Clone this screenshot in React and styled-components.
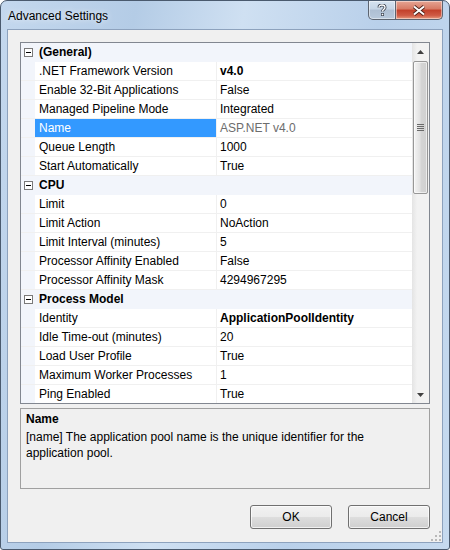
import React from "react";
import styled, { createGlobalStyle } from "styled-components";

const GlobalStyle = createGlobalStyle`
  body {
    margin: 0;
    font-family: "Liberation Sans", Arial, sans-serif;
    font-size: 12px;
    color: #000;
  }
`;

const Window = styled.div`
  width: 450px;
  height: 550px;
  box-sizing: border-box;
  border: 1px solid #4a5a6e;
  border-radius: 7px 7px 3px 3px;
  background: linear-gradient(
    100deg,
    #c4d8ee 0%,
    #b4cce6 25%,
    #cfe0f2 45%,
    #b9d0ea 70%,
    #c6daef 100%
  );
  display: flex;
  flex-direction: column;
  overflow: hidden;
`;

const TitleBar = styled.div`
  height: 28px;
  display: flex;
  align-items: flex-start;
  flex-shrink: 0;
`;

const Title = styled.div`
  padding: 8px 0 0 7px;
  font-size: 12px;
  color: #000;
  text-shadow: 0 0 6px rgba(255, 255, 255, 0.9);
`;

const Caption = styled.div`
  margin-left: auto;
  margin-right: 6px;
  display: flex;
`;

const CaptionButton = styled.div`
  height: 19px;
  width: ${(p) => (p.close ? "47px" : "28px")};
  box-sizing: border-box;
  border: 1px solid #5c6470;
  border-top: none;
  border-left-width: ${(p) => (p.close ? "0" : "1px")};
  border-radius: ${(p) => (p.close ? "0 0 5px 0" : "0 0 0 5px")};
  background: ${(p) =>
    p.close
      ? "linear-gradient(#e6a594 0%, #d77a64 45%, #c2402a 50%, #cf5b45 80%, #e79a7e 100%)"
      : "linear-gradient(#d6e3f0 0%, #c5d5e6 45%, #aebfd3 50%, #b8c9dc 100%)"};
  box-shadow: inset 0 0 0 1px rgba(255, 255, 255, 0.45);
  display: flex;
  align-items: center;
  justify-content: center;
`;

const Client = styled.div`
  flex: 1;
  margin: 0 6px 6px;
  background: #f0f0f0;
  border: 1px solid #8da2bd;
  padding: 12px 12px 13px;
  display: flex;
  flex-direction: column;
  position: relative;
`;

const Grid = styled.div`
  height: 362px;
  border: 1px solid #828790;
  background: #fff;
  display: flex;
  overflow: hidden;
  box-sizing: border-box;
`;

const Rows = styled.div`
  flex: 1;
  overflow: hidden;
`;

const Row = styled.div`
  display: flex;
  height: 18px;
  border-bottom: 1px solid #f0f0f0;
  background: ${(p) => (p.category ? "#f2f5fb" : "#fff")};
  border-bottom-color: ${(p) => (p.category ? "#f2f5fb" : "#f0f0f0")};
`;

const Gutter = styled.div`
  width: 14px;
  flex-shrink: 0;
  background: #f2f5fb;
  display: flex;
  align-items: center;
  padding-left: 3px;
  box-sizing: border-box;
`;

const Expander = styled.div`
  width: 9px;
  height: 9px;
  box-sizing: border-box;
  border: 1px solid #7a7a7a;
  background: #fff;
  display: flex;
  align-items: center;
  justify-content: center;
  &::after {
    content: "";
    width: 5px;
    height: 1px;
    background: #000;
  }
`;

const CategoryName = styled.div`
  padding: 1px 0 0 4px;
  font-weight: bold;
  line-height: 17px;
`;

const Label = styled.div`
  width: 181px;
  flex-shrink: 0;
  box-sizing: border-box;
  padding: 1px 0 0 4px;
  line-height: 17px;
  white-space: nowrap;
  overflow: hidden;
  background: ${(p) => (p.selected ? "#3399ff" : "transparent")};
  color: ${(p) => (p.selected ? "#fff" : "#000")};
`;

const Value = styled.div`
  flex: 1;
  border-left: 1px solid #f0f0f0;
  padding: 1px 0 0 3px;
  line-height: 17px;
  white-space: nowrap;
  font-weight: ${(p) => (p.bold ? "bold" : "normal")};
  color: ${(p) => (p.readonly ? "#6d6d6d" : "#000")};
`;

const ScrollBar = styled.div`
  width: 17px;
  flex-shrink: 0;
  background: linear-gradient(to right, #e4e4e4, #f2f2f2 30%, #f2f2f2);
  display: flex;
  flex-direction: column;
`;

const Arrow = styled.div`
  height: 17px;
  display: flex;
  align-items: center;
  justify-content: center;
  flex-shrink: 0;
`;

const Track = styled.div`
  flex: 1;
  padding-top: 1px;
`;

const Thumb = styled.div`
  height: 133px;
  margin: 0 1px;
  box-sizing: border-box;
  border: 1px solid #979797;
  border-radius: 2px;
  background: linear-gradient(to right, #f4f4f4, #e2e2e2 45%, #d4d4d4 55%, #d0d0d0);
  box-shadow: inset 0 0 0 1px rgba(255, 255, 255, 0.6);
  display: flex;
  align-items: center;
  justify-content: center;
`;

const Description = styled.div`
  margin-top: 4px;
  height: 81px;
  box-sizing: border-box;
  border: 1px solid #a0a0a0;
  padding: 2px 5px;
  line-height: 16px;
`;

const DescTitle = styled.div`
  font-weight: bold;
  margin-bottom: 2px;
`;

const Buttons = styled.div`
  margin-top: auto;
  display: flex;
  justify-content: flex-end;
  gap: 16px;
`;

const Button = styled.button`
  width: 82px;
  height: 24px;
  border: 1px solid #707070;
  border-radius: 3px;
  background: linear-gradient(#f2f2f2 0%, #ebebeb 48%, #dddddd 52%, #cfcfcf 100%);
  box-shadow: inset 0 0 0 1px rgba(255, 255, 255, 0.7);
  font-family: inherit;
  font-size: 12px;
  color: #000;
  padding: 0;
`;

const Grip = styled.svg`
  position: absolute;
  right: 1px;
  bottom: 1px;
`;

const rows = [
  { category: "(General)" },
  { label: ".NET Framework Version", value: "v4.0", bold: true },
  { label: "Enable 32-Bit Applications", value: "False" },
  { label: "Managed Pipeline Mode", value: "Integrated" },
  { label: "Name", value: "ASP.NET v4.0", selected: true, readonly: true },
  { label: "Queue Length", value: "1000" },
  { label: "Start Automatically", value: "True" },
  { category: "CPU" },
  { label: "Limit", value: "0" },
  { label: "Limit Action", value: "NoAction" },
  { label: "Limit Interval (minutes)", value: "5" },
  { label: "Processor Affinity Enabled", value: "False" },
  { label: "Processor Affinity Mask", value: "4294967295" },
  { category: "Process Model" },
  { label: "Identity", value: "ApplicationPoolIdentity", bold: true },
  { label: "Idle Time-out (minutes)", value: "20" },
  { label: "Load User Profile", value: "True" },
  { label: "Maximum Worker Processes", value: "1" },
  { label: "Ping Enabled", value: "True" },
];

function PropertyRow({ row }) {
  if (row.category) {
    return (
      <Row category>
        <Gutter>
          <Expander />
        </Gutter>
        <CategoryName>{row.category}</CategoryName>
      </Row>
    );
  }
  return (
    <Row>
      <Gutter />
      <Label selected={row.selected}>{row.label}</Label>
      <Value bold={row.bold} readonly={row.readonly}>
        {row.value}
      </Value>
    </Row>
  );
}

export default function App() {
  return (
    <>
      <GlobalStyle />
      <Window>
        <TitleBar>
          <Title>Advanced Settings</Title>
          <Caption>
            <CaptionButton>
              <svg width="10" height="12" viewBox="0 0 10 12">
                <path
                  d="M2 3.5 C2 1.5 3.5 1 5 1 C6.8 1 8 2 8 3.5 C8 5.2 5.5 5.5 5.5 7.5"
                  fill="none"
                  stroke="#3b4350"
                  strokeWidth="3"
                />
                <path
                  d="M2 3.5 C2 1.5 3.5 1 5 1 C6.8 1 8 2 8 3.5 C8 5.2 5.5 5.5 5.5 7.5"
                  fill="none"
                  stroke="#fff"
                  strokeWidth="1.3"
                />
                <rect x="4" y="9" width="3" height="3" fill="#3b4350" />
                <rect x="4.7" y="9.7" width="1.6" height="1.6" fill="#fff" />
              </svg>
            </CaptionButton>
            <CaptionButton close>
              <svg width="14" height="11" viewBox="0 0 14 11">
                <path d="M2 1.5 L12 9.5 M12 1.5 L2 9.5" stroke="#4a2018" strokeWidth="3.6" />
                <path d="M2 1.5 L12 9.5 M12 1.5 L2 9.5" stroke="#fff" strokeWidth="2" />
              </svg>
            </CaptionButton>
          </Caption>
        </TitleBar>
        <Client>
          <Grid>
            <Rows>
              {rows.map((row, key) => (
                <PropertyRow key={key} row={row} />
              ))}
            </Rows>
            <ScrollBar>
              <Arrow>
                <svg width="7" height="4" viewBox="0 0 7 4">
                  <path d="M0 4 L3.5 0 L7 4 Z" fill="#404040" />
                </svg>
              </Arrow>
              <Track>
                <Thumb>
                  <svg width="7" height="8" viewBox="0 0 7 8">
                    <path d="M0 0.5 H7 M0 2.5 H7 M0 4.5 H7 M0 6.5 H7" stroke="#6a6a6a" strokeWidth="1" />
                  </svg>
                </Thumb>
              </Track>
              <Arrow>
                <svg width="7" height="4" viewBox="0 0 7 4">
                  <path d="M0 0 L7 0 L3.5 4 Z" fill="#404040" />
                </svg>
              </Arrow>
            </ScrollBar>
          </Grid>
          <Description>
            <DescTitle>Name</DescTitle>
            [name] The application pool name is the unique identifier for the
            <br />
            application pool.
          </Description>
          <Buttons>
            <Button>OK</Button>
            <Button>Cancel</Button>
          </Buttons>
          <Grip width="10" height="10" viewBox="0 0 10 10">
            <g fill="#b8b8b8">
              <rect x="8" y="0" width="2" height="2" />
              <rect x="4" y="4" width="2" height="2" />
              <rect x="8" y="4" width="2" height="2" />
              <rect x="0" y="8" width="2" height="2" />
              <rect x="4" y="8" width="2" height="2" />
              <rect x="8" y="8" width="2" height="2" />
            </g>
          </Grip>
        </Client>
      </Window>
    </>
  );
}
